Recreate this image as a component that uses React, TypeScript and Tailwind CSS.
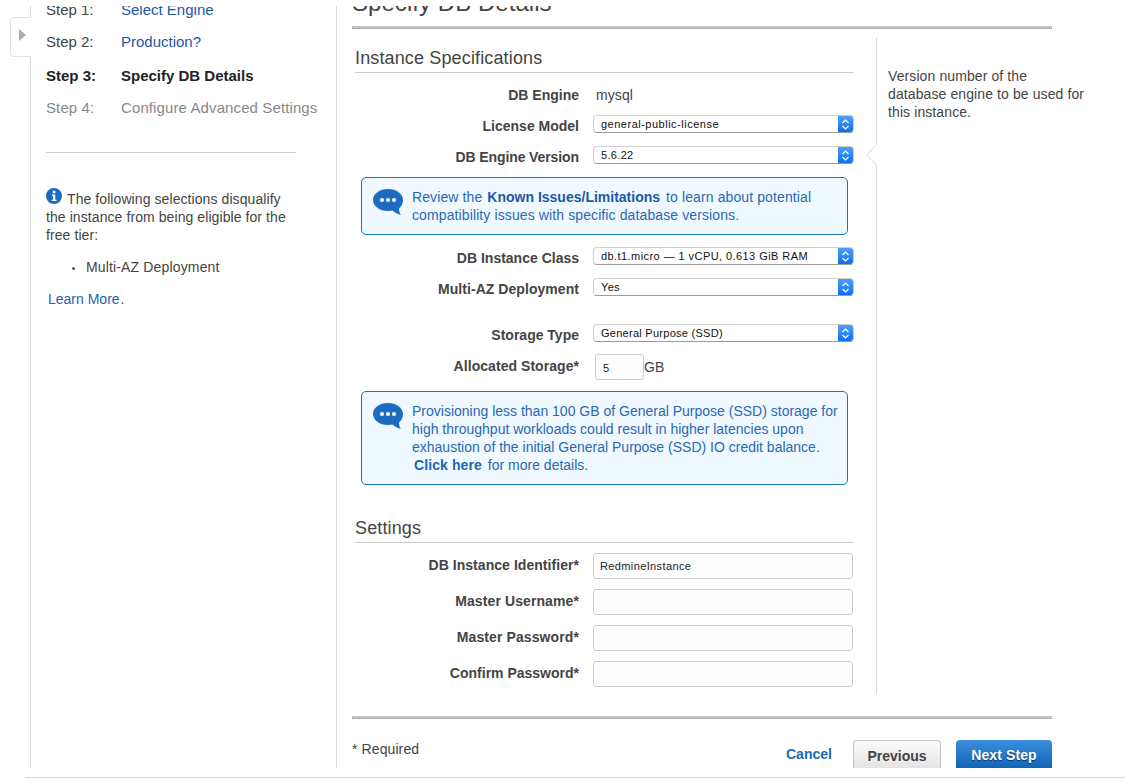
import React from "react";

const Select = ({ top, text, track }: { top: number; text: string; track: string }) => (
  <div className={`absolute left-[593px] w-[261px] h-[18px] rounded-[4px] bg-white border border-[#cfcfcf] border-b-[#9a9a9a] overflow-hidden flex items-center pl-[7px] text-[11px] leading-[16px] text-[#111] pb-[1px] ${track}`} style={{ top }}>
    {text}
    <div className="absolute right-0 top-0 bottom-0 w-[15px] bg-gradient-to-b from-[#4aa0fb] to-[#0c6ef0] flex items-center justify-center">
      <svg width="9" height="13" viewBox="0 0 9 13" fill="none" stroke="#fff" strokeWidth="1.2">
        <path d="M1.5 5 4.5 2 7.5 5" />
        <path d="M1.5 8 4.5 11 7.5 8" />
      </svg>
    </div>
  </div>
);

const Label = ({ y, track, children }: { y: number; track?: string; children: React.ReactNode }) => (
  <div className={`absolute right-[546px] h-[18px] leading-[18px] text-[14px] font-bold text-[#444] whitespace-nowrap ${track ?? ""}`} style={{ top: y - 9 }}>
    {children}
  </div>
);

const Input = ({ top, value }: { top: number; value?: string }) => (
  <div className="absolute left-[593px] w-[260px] h-[26px] rounded-[3px] border border-[#ccc] bg-[#fdfdfd] pl-[6px] text-[11px] leading-[24px] tracking-[0.38px] text-[#222]" style={{ top }}>
    {value}
  </div>
);

const Bubble = () => (
  <svg className="absolute left-[11px] top-[11px]" width="30" height="27" viewBox="0 0 30 27">
    <path d="M15 0C6.700 0 0 4.800 0 11c0 6.100 6.700 11 15 11 1.600 0 3.100-.2 4.500-.5 2.200 2 5.300 3.600 8.500 4.500-1.300-1.700-2-3.700-2-6.500 2.500-2.200 4-5 4-8.500C30 4.800 23.300 0 15 0z" fill="#1b6cc0" />
    <circle cx="9" cy="11" r="2" fill="#fff" />
    <circle cx="15" cy="11" r="2" fill="#fff" />
    <circle cx="21" cy="11" r="2" fill="#fff" />
  </svg>
);

const Step = ({ y, a, b, cls, bcls }: { y: number; a: string; b: string; cls: string; bcls?: string }) => (
  <div className={`absolute left-[46px] h-[20px] leading-[20px] text-[15px] whitespace-nowrap ${cls}`} style={{ top: y - 9 }}>
    <span className="absolute left-0">{a}</span>
    <span className={`absolute left-[75px] ${bcls ?? ""}`}>{b}</span>
  </div>
);

const Rule = ({ top }: { top: number }) => (
  <div className="absolute left-[352px] w-[700px] h-[3px] bg-[#c4c4c4] border-b border-dotted border-[#999]" style={{ top }} />
);

export default function App() {
  return (
    <div className="relative w-[1125px] h-[782px] bg-white overflow-hidden text-[14px] text-[#444] [font-family:Liberation_Sans,sans-serif]">
      {/* side navigation */}
      <div className="absolute left-[30px] top-0 w-[307px] h-[768px] border-l border-r border-[#d8d8d8]" />
      <div className="absolute left-[10px] top-[17px] w-[21px] h-[40px] bg-white border border-r-0 border-[#e2e2e2] rounded-l-[4px] z-10">
        <div className="absolute left-[8px] top-[11px] w-0 h-0 border-y-[6px] border-y-transparent border-l-[7px] border-l-[#aaa]" />
      </div>

      <Step y={9} a="Step 1:" b="Select Engine" cls="text-[#444]" bcls="text-[#1f56a8]" />
      <Step y={41} a="Step 2:" b="Production?" cls="text-[#444]" bcls="text-[#1f56a8]" />
      <Step y={75} a="Step 3:" b="Specify DB Details" cls="font-bold text-[#222]" />
      <Step y={107} a="Step 4:" b="Configure Advanced Settings" cls="text-[#888] tracking-[0.11px]" />

      <div className="absolute left-[46px] top-[152px] w-[250px] h-px bg-[#d0d0d0]" />

      <svg className="absolute left-[46px] top-[188px]" width="16" height="16" viewBox="0 0 16 16">
        <circle cx="8" cy="8" r="8" fill="#1b6cc0" />
        <rect x="6.800" y="2.800" width="2.500" height="2.400" fill="#fff" />
        <path d="M5.800 6.500H9.300V11.700H10.500V13H5.800V11.700H7V7.800H5.800z" fill="#fff" />
      </svg>
      <div className="absolute left-[46px] top-[190px] w-[250px] leading-[18px] text-[14px] tracking-[0.08px] text-[#444]">
        <span className="inline-block w-[21px]" />The following selections disqualify the instance from being eligible for the free tier:
      </div>
      <div className="absolute left-[72px] top-[258px] w-[6px] leading-[18px]">
        <span className="absolute left-0 top-[9px] w-[3px] h-[3px] rounded-full bg-[#555]" />
      </div>
      <div className="absolute left-[86px] top-[258px] leading-[18px] tracking-[0.15px] whitespace-nowrap">Multi-AZ Deployment</div>
      <div className="absolute left-[48px] top-[290px] leading-[18px] whitespace-nowrap">
        <span className="text-[#1f5fb4]">Learn More</span>
        <span className="ml-[1px]">.</span>
      </div>

      {/* title */}
      <div className="absolute left-[352px] top-[-11px] leading-[28px] text-[24px] tracking-[0.05px] text-[#444] whitespace-nowrap">Specify DB Details</div>
      <Rule top={26} />

      {/* help column */}
      <div className="absolute left-[876px] top-[38px] w-px h-[655px] bg-[#d4d4d4]" />
      <svg className="absolute left-[866px] top-[144px]" width="11" height="22" viewBox="0 0 11 22">
        <path d="M10.500 0.500 0.800 11 10.500 21.500" fill="#fff" stroke="#d4d4d4" />
        <rect x="10" y="1" width="1" height="20" fill="#fff" />
      </svg>
      <div className="absolute left-[888px] top-[67px] w-[198px] leading-[18px] text-[14px] tracking-[0.1px] text-[#444]">
        Version number of the database engine to be used for this instance.
      </div>

      {/* Instance Specifications */}
      <div className="absolute left-[355px] top-[47px] leading-[22px] text-[18px] tracking-[0.14px] text-[#444] whitespace-nowrap">Instance Specifications</div>
      <div className="absolute left-[355px] top-[72px] w-[499px] h-px bg-[#ccc]" />

      <Label y={95}>DB Engine</Label>
      <div className="absolute left-[596px] top-[86px] leading-[18px] text-[14px] tracking-[0.1px] text-[#444]">mysql</div>
      <Label y={126}>License Model</Label>
      <Select top={115} text="general-public-license" track="tracking-[0.5px]" />
      <Label y={157} track="tracking-[-0.1px]">DB Engine Version</Label>
      <Select top={146} text="5.6.22" track="tracking-[0.32px]" />

      <div className="absolute left-[361px] top-[177px] w-[487px] h-[58px] rounded-[5px] border border-[#1a75bb] bg-[#f0f9ff]">
        <Bubble />
        <div className="absolute left-[50px] top-[10px] w-[432px] leading-[18px] text-[14px] tracking-[0.11px] text-[#2a68b4]">
          Review the <b className="ml-[1px] mr-[2px] tracking-normal text-[#1d5aa5]">Known Issues/Limitations</b> to learn about potential compatibility issues with specific database versions.
        </div>
      </div>

      <Label y={258}>DB Instance Class</Label>
      <Select top={247} text="db.t1.micro — 1 vCPU, 0.613 GiB RAM" track="tracking-[0.43px]" />
      <Label y={289} track="tracking-[0.05px]">Multi-AZ Deployment</Label>
      <Select top={278} text="Yes" track="tracking-[0.32px]" />
      <Label y={335}>Storage Type</Label>
      <Select top={324} text="General Purpose (SSD)" track="tracking-[0.27px]" />
      <Label y={366} track="tracking-[0.05px]">Allocated Storage*</Label>
      <div className="absolute left-[595px] top-[354px] w-[49px] h-[26px] rounded-[3px] border border-[#ccc] bg-[#fdfdfd] pl-[7px] text-[11px] leading-[26px] text-[#222]">5</div>
      <div className="absolute left-[644px] top-[358px] leading-[18px] text-[14px] text-[#444]">GB</div>

      <div className="absolute left-[361px] top-[391px] w-[487px] h-[94px] rounded-[5px] border border-[#1a75bb] bg-[#f0f9ff]">
        <Bubble />
        <div className="absolute left-[50px] top-[10px] w-[432px] leading-[18px] text-[14px] text-[#2a68b4]">
          Provisioning less than 100 GB of General Purpose (SSD) storage for high throughput workloads could result in higher latencies upon exhaustion of the initial General Purpose (SSD) IO credit balance.
          <br />
          <b className="ml-[2px] mr-[2px] tracking-[0.1px] text-[#1d66b0]">Click here</b> for more details.
        </div>
      </div>

      {/* Settings */}
      <div className="absolute left-[355px] top-[517px] leading-[22px] text-[18px] tracking-[0.14px] text-[#444]">Settings</div>
      <div className="absolute left-[355px] top-[542px] w-[499px] h-px bg-[#ccc]" />
      <Label y={565} track="tracking-[0.05px]">DB Instance Identifier*</Label>
      <Input top={553} value="RedmineInstance" />
      <Label y={601} track="tracking-[0.1px]">Master Username*</Label>
      <Input top={589} />
      <Label y={637} track="tracking-[0.1px]">Master Password*</Label>
      <Input top={625} />
      <Label y={673}>Confirm Password*</Label>
      <Input top={661} />

      {/* footer */}
      <Rule top={716} />
      <div className="absolute left-[352px] top-[740px] leading-[18px] text-[14px] tracking-[0.1px] text-[#444]">* Required</div>
      <div className="absolute left-[786px] top-[745px] leading-[18px] text-[14px] font-bold text-[#1b6cb5]">Cancel</div>
      <div className="absolute left-[853px] top-[740px] w-[88px] h-[28px] rounded-t-[4px] border border-b-0 border-[#c4c4c4] bg-gradient-to-b from-[#fbfbfb] to-[#e4e4e4] text-center text-[14px] leading-[31px] font-bold text-[#444]">Previous</div>
      <div className="absolute left-[956px] top-[740px] w-[96px] h-[28px] rounded-t-[4px] bg-gradient-to-b from-[#3b8edc] to-[#0f66b8] text-center text-[14px] leading-[31px] font-bold tracking-[0.1px] text-white [text-shadow:0_1px_1px_rgba(0,0,0,0.5)]">Next Step</div>
      <div className="absolute left-[25px] top-[777px] w-[1100px] h-px bg-[#d8d8d8]" />
      <div className="absolute left-0 top-0 w-full h-[6px] bg-white z-20" />
    </div>
  );
}
